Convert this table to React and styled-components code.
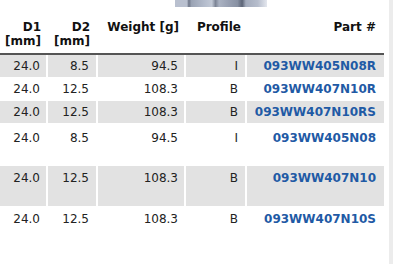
import styled, { createGlobalStyle } from "styled-components";

const GlobalStyle = createGlobalStyle`
    body {
        margin: 0;
        background: #fff;
        font-family: "DejaVu Sans", "Liberation Sans", sans-serif;
    }
`

const Page = styled.div`
    display: flex;
    min-height: 264px;
`

const Content = styled.div`
    width: 384px;
    flex-shrink: 0;
`

const Rail = styled.div`
    width: 4px;
    margin-left: 5px;
    background-color: #ececec;
`

const Photo = styled.div`
    margin-left: 175px;
    width: 92px;
    height: 7px;
    background: linear-gradient(to right,
        #b9c0cf 0%, #b9c0cf 13%, #6f7789 15%, #9aa3b4 18%, #b4bccc 32%,
        #c2c9d6 40%, #7d8596 44%, #aab2c2 48%, #98a0b2 58%, #8891a3 68%,
        #5c6476 73%, #a3abbc 77%, #b6bdcc 90%, #e4e7ee 100%);
`

const Table = styled.table`
    width: 384px;
    border-collapse: collapse;
    table-layout: fixed;
    font-size: 12px;
    line-height: 14px;
`

const Col = styled.col`
    width: ${props => props.$w}px;
`

const Head = styled.th`
    padding: 13px ${props => props.$pr || 6}px 5px 0;
    text-align: right;
    vertical-align: top;
    font-weight: bold;
    color: #111;
    white-space: nowrap;
    border-bottom: 2px solid #555;
`

const Row = styled.tr`
    background-color: ${props => props.$shade ? '#e2e2e2' : '#fff'};
`

const Cell = styled.td`
    height: ${props => props.$h}px;
    padding: ${props => props.$pt}px ${props => props.$pr || 6}px 0 0;
    box-sizing: border-box;
    text-align: right;
    vertical-align: top;
    white-space: nowrap;
    color: #222;
    border-right: 2px solid #fff;
    border-bottom: 1px solid #fff;

    &:last-child {
        border-right: none;
    }
`

const PartCell = styled(Cell)`
    color: #1f5aa5;
    font-weight: bold;
`

const rows = [
    { d1: '24.0', d2: '8.5', weight: '94.5', profile: 'I', part: '093WW405N08R', h: 23, pt: 4, shade: true },
    { d1: '24.0', d2: '12.5', weight: '108.3', profile: 'B', part: '093WW407N10R', h: 23, pt: 4 },
    { d1: '24.0', d2: '12.5', weight: '108.3', profile: 'B', part: '093WW407N10RS', h: 23, pt: 4, shade: true },
    { d1: '24.0', d2: '8.5', weight: '94.5', profile: 'I', part: '093WW405N08', h: 42, pt: 7 },
    { d1: '24.0', d2: '12.5', weight: '108.3', profile: 'B', part: '093WW407N10', h: 41, pt: 5, shade: true },
    { d1: '24.0', d2: '12.5', weight: '108.3', profile: 'B', part: '093WW407N10S', h: 41, pt: 5 },
]

function App() {
    return (
        <Page>
            <GlobalStyle />
            <Content>
                <Photo />
                <Table>
                    <colgroup>
                        <Col $w={47} />
                        <Col $w={50} />
                        <Col $w={88} />
                        <Col $w={61} />
                        <Col $w={138} />
                    </colgroup>
                    <thead>
                        <tr>
                            <Head>D1<br />[mm]</Head>
                            <Head $pr={7}>D2<br />[mm]</Head>
                            <Head>Weight [g]</Head>
                            <Head $pr={5}>Profile</Head>
                            <Head $pr={8}>Part #</Head>
                        </tr>
                    </thead>
                    <tbody>
                        {rows.map((r) => (
                            <Row key={r.part} $shade={r.shade}>
                                <Cell $h={r.h} $pt={r.pt}>{r.d1}</Cell>
                                <Cell $h={r.h} $pt={r.pt} $pr={7}>{r.d2}</Cell>
                                <Cell $h={r.h} $pt={r.pt}>{r.weight}</Cell>
                                <Cell $h={r.h} $pt={r.pt} $pr={7}>{r.profile}</Cell>
                                <PartCell $h={r.h} $pt={r.pt} $pr={8}>{r.part}</PartCell>
                            </Row>
                        ))}
                    </tbody>
                </Table>
            </Content>
            <Rail />
        </Page>
    )
}

export default App
